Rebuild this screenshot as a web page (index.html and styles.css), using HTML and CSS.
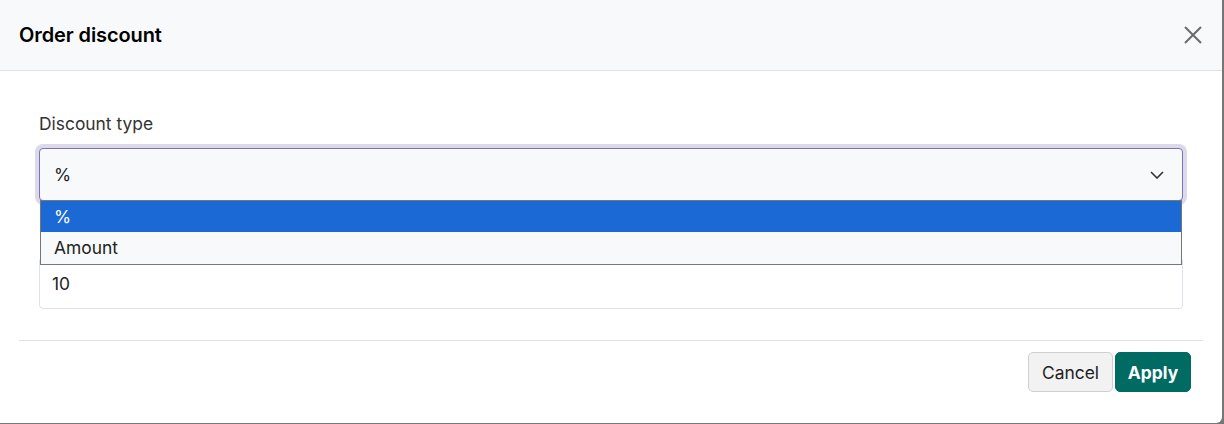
FILE: index.html
```html
<!DOCTYPE html>
<html lang="en">
<head>
<meta charset="utf-8">
<title>Order discount</title>
<link rel="stylesheet" href="styles.css">
</head>
<body>
<div class="modal">
  <div class="modal-header">
    <h1 class="modal-title">Order discount</h1>
    <button class="close-btn" aria-label="Close">
      <svg width="18" height="18" viewBox="0 0 18 18"><path d="M1 1L17 17M17 1L1 17" stroke="#6b6b6b" stroke-width="2" fill="none"/></svg>
    </button>
  </div>
  <div class="modal-body">
    <div class="field">
      <label class="field-label">Discount type</label>
      <div class="select-wrap">
        <div class="select">
          <span>%</span>
          <svg class="chevron" width="14" height="8" viewBox="0 0 14 8"><path d="M1 1L7 7L13 1" stroke="#333" stroke-width="1.6" fill="none"/></svg>
        </div>
        <ul class="dropdown">
          <li class="option selected">%</li>
          <li class="option">Amount</li>
        </ul>
      </div>
    </div>
    <div class="field field-second">
      <div class="input">10</div>
    </div>
  </div>
  <div class="modal-footer">
    <button class="btn btn-cancel">Cancel</button>
    <button class="btn btn-apply">Apply</button>
  </div>
</div>
</body>
</html>
```
FILE: styles.css
```css
* { box-sizing: border-box; }
html, body { margin: 0; padding: 0; }
body {
  background: #767676;
  font-family: Inter, "Noto Sans", sans-serif;
  color: #333;
  width: 1224px;
  height: 424px;
  overflow: hidden;
}
.modal {
  width: 1222px;
  height: 423px;
  background: #fff;
  border-bottom-right-radius: 6px;
  display: flex;
  flex-direction: column;
}
.modal-header {
  height: 71px;
  background: #f8f9fa;
  border-bottom: 1px solid #dee2e6;
  display: flex;
  align-items: center;
  justify-content: space-between;
  padding: 0 20px 0 19px;
}
.modal-title {
  margin: 0;
  font-size: 20px;
  font-weight: 600;
  color: #000;
  letter-spacing: -0.1px;
}
.close-btn {
  background: none;
  border: 0;
  padding: 0;
  width: 18px;
  height: 18px;
  display: flex;
}
.modal-body {
  padding: 41px 39px 31px 39px;
}
.field { display: flex; flex-direction: column; }
.field-label {
  font-size: 17.4px;
  line-height: 24px;
  color: #333;
  margin-bottom: 12px;
}
.field-second { margin-top: 56px; }
.select-wrap { position: relative; }
.select {
  height: 53px;
  border: 1px solid #7d72b4;
  border-radius: 4px;
  background: #f8f9fa;
  box-shadow: 0 0 0 4px #dcd9ea;
  display: flex;
  align-items: center;
  justify-content: space-between;
  padding: 0 18px 0 14px;
  font-size: 17.4px;
  color: #222;
}
.chevron { display: block; }
.dropdown {
  position: absolute;
  left: 1px;
  right: 1px;
  top: 52px;
  margin: 0;
  padding: 0;
  list-style: none;
  border: 1px solid #767676;
  background: #f8f9fa;
  z-index: 2;
}
.option {
  height: 32px;
  line-height: 32px;
  padding-left: 13px;
  font-size: 17.4px;
  color: #222;
}
.option.selected {
  background: #1a69d4;
  color: #fff;
  height: 31px;
  line-height: 31px;
}
.input {
  height: 52px;
  border: 1px solid #dee2e6;
  border-radius: 4px;
  display: flex;
  align-items: center;
  padding-left: 12px;
  font-size: 17.4px;
  color: #222;
}
.modal-footer {
  margin: 0 19px;
  border-top: 1px solid #dee2e6;
  padding: 11px 12px 0 0;
  display: flex;
  justify-content: flex-end;
  gap: 2px;
}
.btn {
  height: 40px;
  border-radius: 5px;
  font-family: Inter, "Noto Sans", sans-serif;
  font-size: 17.4px;
  cursor: pointer;
  padding: 0;
}
.btn-cancel {
  width: 85px;
  background: #f2f2f2;
  border: 1px solid #cfcfcf;
  color: #222;
}
.btn-apply {
  width: 76px;
  background: #006b63;
  border: 1px solid #006b63;
  color: #fff;
  font-weight: 700;
}
```
